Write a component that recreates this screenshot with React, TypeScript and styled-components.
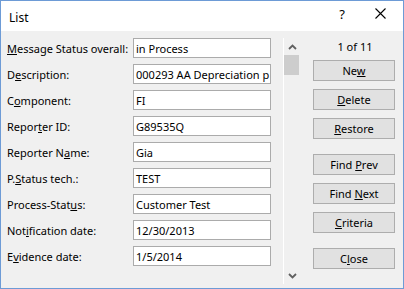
import styled, { createGlobalStyle } from "styled-components";

const GlobalStyle = createGlobalStyle`
  html, body {
    margin: 0;
    padding: 0;
    background: #ffffff;
  }
  * {
    box-sizing: border-box;
  }
`;

const Window = styled.div`
  width: 404px;
  height: 289px;
  border: 1px solid #6d9bd6;
  display: flex;
  flex-direction: column;
  font-family: "Segoe UI", "Noto Sans", sans-serif;
  font-size: 11px;
  color: #000;
`;

const TitleBar = styled.div`
  height: 30px;
  background: #fff;
  display: flex;
  align-items: center;
  padding-left: 8px;
`;

const Title = styled.span`
  flex: 1;
  font-size: 12px;
  padding-top: 2px;
`;

const TitleButton = styled.div<{ $w: number }>`
  width: ${(p) => p.$w}px;
  height: 30px;
  display: flex;
  align-items: flex-start;
  justify-content: center;
  padding-top: 4px;
  font-size: 13px;
`;

const Body = styled.div`
  flex: 1;
  background: #f0f0f0;
  display: flex;
`;

const Form = styled.div`
  display: grid;
  grid-template-columns: 126px 138px;
  grid-auto-rows: 20px;
  row-gap: 6px;
  padding: 7px 0 0 6px;
  align-content: start;
`;

const Label = styled.label`
  display: flex;
  align-items: center;
  white-space: nowrap;
  u {
    text-underline-offset: 1px;
  }
`;

const Field = styled.div`
  background: #fff;
  border: 1px solid #ababab;
  display: flex;
  align-items: center;
  padding-left: 2px;
  white-space: nowrap;
  overflow: hidden;
`;

const ScrollBar = styled.div`
  margin: 7px 0 4px 12px;
  width: 17px;
  border-left: 1px solid #ffffff;
  display: flex;
  flex-direction: column;
  align-items: stretch;
`;

const ScrollArrow = styled.div`
  height: 17px;
  display: flex;
  align-items: center;
  justify-content: center;
`;

const Thumb = styled.div`
  height: 20px;
  margin-right: 1px;
  background: #cdcdcd;
`;

const Track = styled.div`
  flex: 1;
`;

const Side = styled.div`
  flex: 1;
  display: flex;
  flex-direction: column;
  padding: 8px 6px 0 13px;
`;

const Counter = styled.div`
  height: 20px;
  text-align: center;
  line-height: 16px;
  margin-bottom: 1px;
`;

const Button = styled.button<{ $gap?: boolean }>`
  height: 21px;
  width: 82px;
  margin-top: ${(p) => (p.$gap ? 15 : 8)}px;
  border: 1px solid #adadad;
  background: #e1e1e1;
  font: inherit;
  color: #000;
  padding: 0;
  &:first-of-type {
    margin-top: 0;
  }
  u {
    text-underline-offset: 1px;
  }
`;

const fields: [React.ReactNode, string][] = [
  [<><u>M</u>essage Status overall:</>, "in Process"],
  [<>D<u>e</u>scription:</>, "000293 AA Depreciation p"],
  [<>C<u>o</u>mponent:</>, "FI"],
  [<>Repor<u>t</u>er ID:</>, "G89535Q"],
  [<>Reporter N<u>a</u>me:</>, "Gia"],
  [<>P.<u>S</u>tatus tech.:</>, "TEST"],
  [<>Process-Stat<u>u</u>s:</>, "Customer Test"],
  [<>Not<u>i</u>fication date:</>, "12/30/2013"],
  [<>E<u>v</u>idence date:</>, "1/5/2014"],
];

function Chevron({ up }: { up?: boolean }) {
  return (
    <svg width="9" height="6" viewBox="0 0 9 6">
      <polyline
        points={up ? "1,5 4.5,1.5 8,5" : "1,1 4.5,4.5 8,1"}
        fill="none"
        stroke="#606060"
        strokeWidth="1.8"
      />
    </svg>
  );
}

export default function App() {
  return (
    <>
      <GlobalStyle />
      <Window>
        <TitleBar>
          <Title>List</Title>
          <TitleButton $w={30}>?</TitleButton>
          <TitleButton $w={46}>
            <svg width="11" height="11" viewBox="0 0 11 11" style={{ marginTop: 3 }}>
              <path d="M0.5 0.5 L10.5 10.5 M10.5 0.5 L0.5 10.5" stroke="#000" strokeWidth="1.1" />
            </svg>
          </TitleButton>
        </TitleBar>
        <Body>
          <Form>
            {fields.map(([label, value], i) => (
              <>
                <Label key={"l" + i}>{label}</Label>
                <Field key={"f" + i}>{value}</Field>
              </>
            ))}
          </Form>
          <ScrollBar>
            <ScrollArrow>
              <Chevron up />
            </ScrollArrow>
            <Thumb />
            <Track />
            <ScrollArrow>
              <Chevron />
            </ScrollArrow>
          </ScrollBar>
          <Side>
            <Counter>1 of 11</Counter>
            <Button>
              Ne<u>w</u>
            </Button>
            <Button>
              <u>D</u>elete
            </Button>
            <Button>
              <u>R</u>estore
            </Button>
            <Button $gap>
              Find <u>P</u>rev
            </Button>
            <Button>
              Find <u>N</u>ext
            </Button>
            <Button>
              <u>C</u>riteria
            </Button>
            <Button $gap>
              C<u>l</u>ose
            </Button>
          </Side>
        </Body>
      </Window>
    </>
  );
}
